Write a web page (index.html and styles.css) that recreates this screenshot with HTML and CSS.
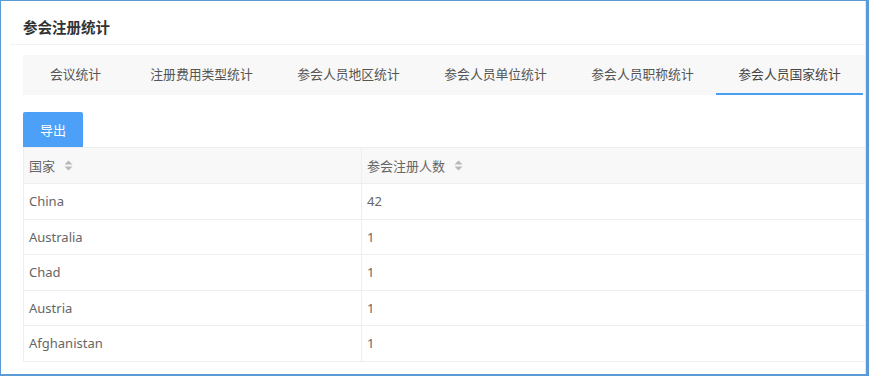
FILE: index.html
```html
<!DOCTYPE html>
<html lang="zh-CN">
<head>
<meta charset="utf-8">
<title>参会注册统计</title>
<link rel="stylesheet" href="styles.css">
</head>
<body>
<div class="frame">
  <div class="inner">
    <div class="title-bar"><h1 class="title">参会注册统计</h1></div>
    <div class="content">
      <ul class="tabs">
        <li class="tab tab-first">会议统计</li>
        <li class="tab">注册费用类型统计</li>
        <li class="tab">参会人员地区统计</li>
        <li class="tab">参会人员单位统计</li>
        <li class="tab">参会人员职称统计</li>
        <li class="tab active">参会人员国家统计</li>
      </ul>
      <button class="btn">导出</button>
      <div class="grid">
        <div class="row head">
          <div class="cell c1">国家<svg class="sort" width="9" height="11" viewBox="0 0 9 11"><path d="M0.5 4.5 L4.5 0.5 L8.5 4.5 Z" fill="#b8b8b8"/><path d="M0.5 6.5 L4.5 10.5 L8.5 6.5 Z" fill="#b8b8b8"/></svg></div>
          <div class="cell c2">参会注册人数<svg class="sort" width="9" height="11" viewBox="0 0 9 11"><path d="M0.5 4.5 L4.5 0.5 L8.5 4.5 Z" fill="#b8b8b8"/><path d="M0.5 6.5 L4.5 10.5 L8.5 6.5 Z" fill="#b8b8b8"/></svg></div>
        </div>
        <div class="row"><div class="cell c1">China</div><div class="cell c2">42</div></div>
        <div class="row"><div class="cell c1">Australia</div><div class="cell c2">1</div></div>
        <div class="row"><div class="cell c1">Chad</div><div class="cell c2">1</div></div>
        <div class="row"><div class="cell c1">Austria</div><div class="cell c2">1</div></div>
        <div class="row"><div class="cell c1">Afghanistan</div><div class="cell c2">1</div></div>
      </div>
    </div>
  </div>
</div>
</body>
</html>
```

FILE: styles.css
```css
* { box-sizing: border-box; }
html, body { margin: 0; padding: 0; background: #fff; }
body {
  font-family: "Noto Sans", "Noto Sans CJK SC", sans-serif;
  font-size: 13px;
  color: #666;
}
.frame {
  width: 869px;
  height: 376px;
  border-style: solid;
  border-color: #5b9bd5;
  border-width: 1px 3px 2px 1px;
  overflow: hidden;
}
.inner {
  height: 100%;
  border-right: 1px solid #e6e6e6;
  overflow: hidden;
}
.title-bar {
  height: 44px;
  margin-left: 9px;
  border-bottom: 1px solid #f2f2f2;
  display: flex;
  align-items: center;
  padding-left: 13px;
  padding-top: 8px;
}
.title {
  margin: 0;
  font-family: "Noto Sans CJK SC", sans-serif;
  font-size: 14.5px;
  font-weight: bold;
  color: #333;
  line-height: 20px;
}
.content {
  padding-left: 22px;
  padding-top: 10px;
}
.tabs {
  list-style: none;
  margin: 0;
  padding: 0;
  height: 40px;
  background: #f8f8f8;
  display: flex;
}
.tab {
  width: 147px;
  height: 40px;
  line-height: 38px;
  text-align: center;
  font-family: "Noto Sans CJK SC", sans-serif;
  font-size: 12.8px;
  color: #555;
  border-bottom: 2px solid transparent;
}
.tab-first { width: 105px; }
.tab.active { border-bottom-color: #4a9ff5; color: #444; }
.btn {
  display: block;
  margin-top: 17px;
  width: 60px;
  height: 35px;
  border: none;
  border-radius: 2px 2px 0 0;
  background: #4ca0f7;
  color: #fff;
  font-family: "Noto Sans CJK SC", sans-serif;
  font-size: 13px;
  padding: 0;
}
.grid {
  border-left: 1px solid #eeeeee;
  border-top: 1px solid #eeeeee;
}
.row {
  display: flex;
  height: 35.5px;
  border-bottom: 1px solid #eeeeee;
}
.row.head { height: 36px; background: #f8f8f8; }
.cell {
  display: flex;
  align-items: center;
  padding-left: 5px;
  color: #666;
}
.c1 { width: 338px; border-right: 1px solid #eeeeee; }
.c2 { flex: 1; }
.head .cell { font-family: "Noto Sans CJK SC", sans-serif; font-size: 13px; }
.sort { margin-left: 9px; }
```
